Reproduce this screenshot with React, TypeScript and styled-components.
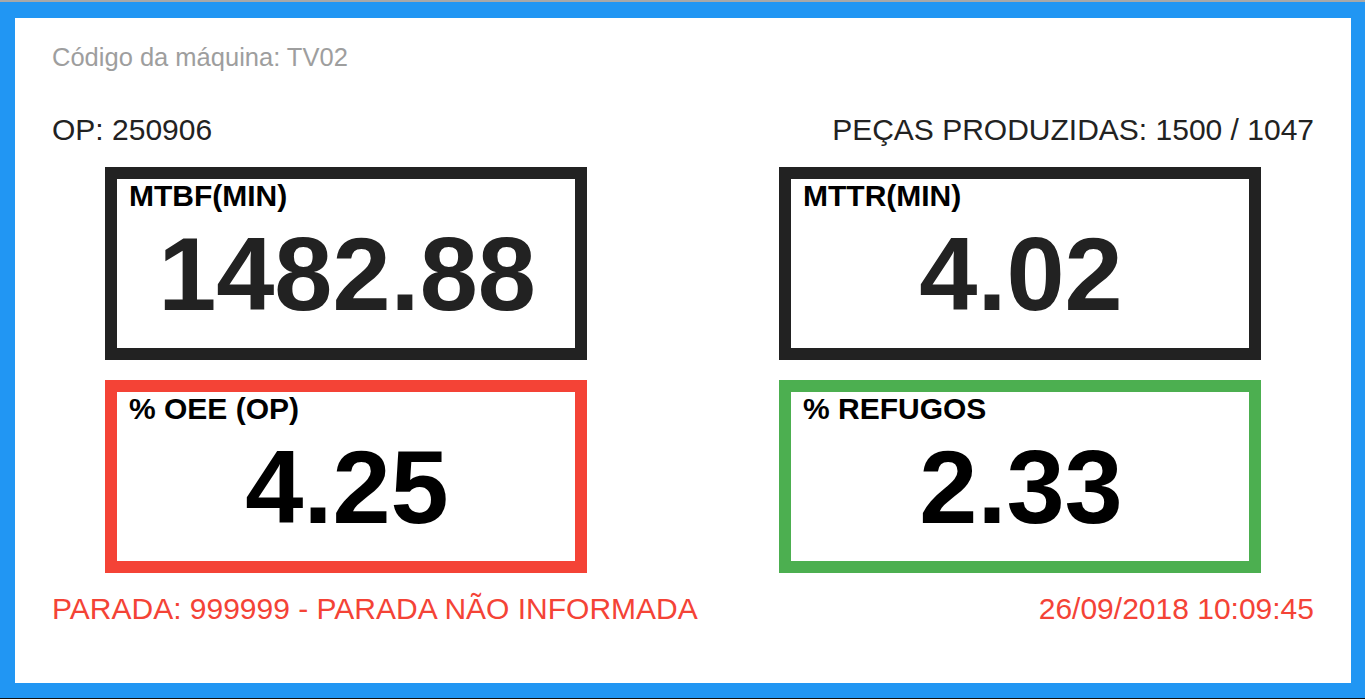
import React from "react";
import styled, { createGlobalStyle } from "styled-components";

const GlobalStyle = createGlobalStyle`
  html, body {
    margin: 0;
    padding: 0;
    background: #ffffff;
  }
  body {
    font-family: "Liberation Sans", Arial, Helvetica, sans-serif;
    color: #222222;
  }
`;

const Screen = styled.div`
  display: flex;
  flex-direction: column;
  width: 1365px;
  height: 699px;
  overflow: hidden;
`;

const TopRule = styled.div`
  height: 2px;
  flex: none;
  background: #a8a8a8;
`;

const BottomRule = styled.div`
  height: 1px;
  flex: none;
  background: #111111;
`;

const Frame = styled.main`
  flex: 1;
  min-height: 0;
  border-style: solid;
  border-color: #2196f3;
  border-width: 16px 14px 15px 15px;
  background: #ffffff;
  padding: 25px 37px 0 37px;
  display: flex;
  flex-direction: column;
`;

const MachineCode = styled.div`
  font-size: 25.5px;
  line-height: 29px;
  color: #9e9e9e;
`;

const InfoRow = styled.div<{ $tone?: "dark" | "alert"; $top: number }>`
  display: flex;
  justify-content: space-between;
  align-items: baseline;
  margin-top: ${(p) => p.$top}px;
  font-size: 30px;
  line-height: 34px;
  color: ${(p) => (p.$tone === "alert" ? "#f44336" : "#222222")};
`;

const CardGrid = styled.section`
  display: grid;
  grid-template-columns: 482px 482px;
  justify-content: space-between;
  row-gap: 20px;
  padding: 0 53px;
  margin-top: 20px;
`;

const Card = styled.div<{ $accent: string }>`
  box-sizing: border-box;
  height: 193px;
  border: 12px solid ${(p) => p.$accent};
  padding: 0 10px 13px 12px;
  display: flex;
  flex-direction: column;
`;

const CardLabel = styled.div`
  font-size: 30px;
  line-height: 34px;
  font-weight: 700;
  color: #000000;
  white-space: nowrap;
`;

const CardValue = styled.div<{ $ink: string }>`
  font-size: 104.5px;
  line-height: 122px;
  font-weight: 700;
  text-align: center;
  color: ${(p) => p.$ink};
`;

type Metric = { label: string; value: string; accent: string; ink: string };

const metrics: Metric[] = [
  { label: "MTBF(MIN)", value: "1482.88", accent: "#222222", ink: "#222222" },
  { label: "MTTR(MIN)", value: "4.02", accent: "#222222", ink: "#222222" },
  { label: "% OEE (OP)", value: "4.25", accent: "#f44336", ink: "#000000" },
  { label: "% REFUGOS", value: "2.33", accent: "#4caf50", ink: "#000000" },
];

export default function App() {
  return (
    <>
      <GlobalStyle />
      <Screen>
        <TopRule />
        <Frame>
          <MachineCode>Código da máquina: TV02</MachineCode>
          <InfoRow $top={41}>
            <span>OP: 250906</span>
            <span>PEÇAS PRODUZIDAS: 1500 / 1047</span>
          </InfoRow>
          <CardGrid>
            {metrics.map((m) => (
              <Card key={m.label} $accent={m.accent}>
                <CardLabel>{m.label}</CardLabel>
                <CardValue $ink={m.ink}>{m.value}</CardValue>
              </Card>
            ))}
          </CardGrid>
          <InfoRow $top={19} $tone="alert">
            <span>PARADA: 999999 - PARADA NÃO INFORMADA</span>
            <span>26/09/2018 10:09:45</span>
          </InfoRow>
        </Frame>
        <BottomRule />
      </Screen>
    </>
  );
}
